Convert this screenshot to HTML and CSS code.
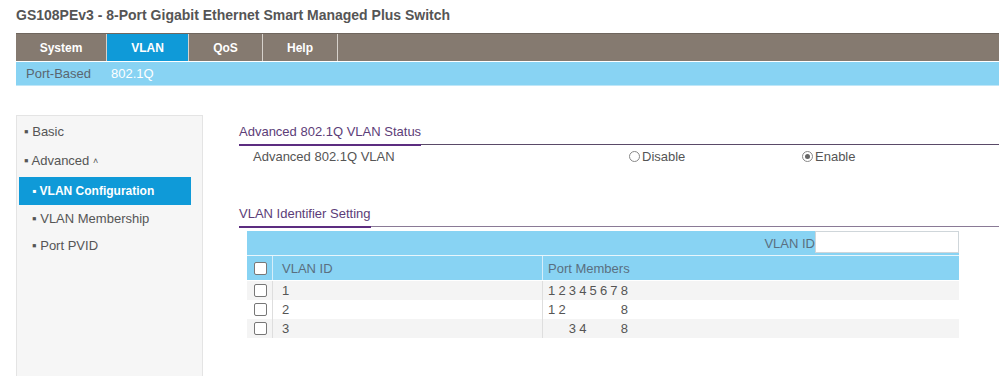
FILE: index.html
```html
<!DOCTYPE html>
<html lang="en">

<head>
    <meta charset="UTF-8">
    <title>GS108PEv3</title>
    <link rel="stylesheet" href="styles.css">
</head>

<body>
    <div class="title">GS108PEv3 - 8-Port Gigabit Ethernet Smart Managed Plus Switch</div>

    <div class="nav">
        <div class="tab tab-system">System</div>
        <div class="tab tab-vlan active">VLAN</div>
        <div class="tab tab-qos">QoS</div>
        <div class="tab tab-help">Help</div>
    </div>
    <div class="subnav">
        <span class="sub">Port-Based</span>
        <span class="sub active">802.1Q</span>
    </div>

    <div class="page">
        <div class="sidebar">
            <div class="side-item">&#9642; Basic</div>
            <div class="side-item open">&#9642; Advanced <span class="caret">&#708;</span></div>
            <div class="side-item sub-item selected">&#9642; VLAN Configuration</div>
            <div class="side-item sub-item">&#9642; VLAN Membership</div>
            <div class="side-item sub-item">&#9642; Port PVID</div>
        </div>

        <div class="main">
            <div class="section-head"><span>Advanced 802.1Q VLAN Status</span></div>
            <div class="status-row">
                <div class="status-label">Advanced 802.1Q VLAN</div>
                <label class="radio radio-disable"><span class="dot"></span>Disable</label>
                <label class="radio radio-enable"><span class="dot on"></span>Enable</label>
            </div>

            <div class="section-head second"><span>VLAN Identifier Setting</span></div>
            <div class="vlan-table">
                <div class="search-row">
                    <span class="search-label">VLAN ID</span>
                    <span class="search-box"></span>
                </div>
                <div class="row head">
                    <div class="c-check"><span class="box"></span></div>
                    <div class="c-id">VLAN ID</div>
                    <div class="c-ports">Port Members</div>
                </div>
                <div class="row odd">
                    <div class="c-check"><span class="box"></span></div>
                    <div class="c-id">1</div>
                    <div class="c-ports ports">
                        <span>1</span><span>2</span><span>3</span><span>4</span><span>5</span><span>6</span><span>7</span><span>8</span>
                    </div>
                </div>
                <div class="row">
                    <div class="c-check"><span class="box"></span></div>
                    <div class="c-id">2</div>
                    <div class="c-ports ports">
                        <span>1</span><span>2</span><span></span><span></span><span></span><span></span><span></span><span>8</span>
                    </div>
                </div>
                <div class="row odd">
                    <div class="c-check"><span class="box"></span></div>
                    <div class="c-id">3</div>
                    <div class="c-ports ports">
                        <span></span><span></span><span>3</span><span>4</span><span></span><span></span><span></span><span>8</span>
                    </div>
                </div>
            </div>
        </div>
    </div>
</body>

</html>
```

FILE: styles.css
```css
body {
    font-family: 'Liberation Sans', Arial, sans-serif;
    margin: 0;
    padding: 0;
    background-color: #fff;
    color: #555;
    font-size: 13px;
    height: 376px;
    overflow: hidden;
}

.title {
    font-size: 14px;
    font-weight: bold;
    color: #555;
    padding: 7px 0 0 16px;
    height: 33px;
    box-sizing: border-box;
}

.nav {
    display: flex;
    margin-left: 16px;
    height: 28px;
    background-color: #857a70;
    border-top: 1px solid #6f665e;
    box-sizing: border-box;
}

.tab {
    color: #fff;
    font-size: 12px;
    font-weight: bold;
    display: flex;
    align-items: center;
    justify-content: center;
    border-right: 1px solid #d7d2cc;
}

.tab-system { width: 90px; }
.tab-vlan { width: 81px; }
.tab-qos { width: 73px; }
.tab-help { width: 74px; }

.tab.active {
    background-color: #0f9ad8;
}

.subnav {
    margin-left: 16px;
    margin-top: 1px;
    height: 24px;
    background-color: #88d3f3;
    border-bottom: 1px solid #bfe6f7;
    display: flex;
    align-items: center;
    padding-left: 10px;
    gap: 20px;
    box-sizing: border-box;
}

.sub {
    color: #5a6670;
    font-size: 13px;
}

.sub.active {
    color: #fff;
}

.page {
    display: flex;
    margin-top: 29px;
    margin-left: 16px;
}

.sidebar {
    width: 187px;
    height: 270px;
    background-color: #f6f6f6;
    border: 1px solid #e4e4e4;
    box-sizing: border-box;
    padding-top: 7px;
}

.side-item {
    height: 29px;
    line-height: 18px;
    padding-left: 7px;
    color: #555;
    font-size: 13px;
}

.side-item.open {
    height: 25px;
}

.side-item .caret {
    font-size: 9px;
    vertical-align: 1px;
}

.sub-item {
    padding-left: 15px;
    height: 27px;
    line-height: 27px;
}

.side-item.selected {
    background-color: #0f9ad8;
    color: #fff;
    font-weight: bold;
    font-size: 12px;
    margin: 0 11px 0 2px;
    padding-left: 13px;
    height: 28px;
    line-height: 28px;
}

.main {
    margin-left: 36px;
    flex: 1;
    padding-top: 9px;
}

.section-head {
    border-bottom: 1px solid #5a4a68;
    height: 21px;
    box-sizing: border-box;
    display: flex;
    align-items: flex-end;
}

.section-head span {
    color: #5c3d78;
    font-size: 13px;
    padding-bottom: 5px;
    border-bottom: 2px solid #5c2d80;
    margin-bottom: -2px;
}

.section-head.second {
    margin-top: 39px;
    border-bottom-color: #8a7a96;
}

.status-row {
    display: flex;
    align-items: center;
    height: 22px;
    padding-left: 14px;
}

.status-label {
    width: 376px;
}

.radio {
    display: flex;
    align-items: center;
}

.radio-disable { width: 173px; }

.dot {
    width: 11px;
    height: 11px;
    border: 1px solid #888;
    border-radius: 50%;
    box-sizing: border-box;
    margin-right: 2px;
    background: #fff;
    position: relative;
}

.dot.on::after {
    content: "";
    position: absolute;
    left: 2px;
    top: 2px;
    width: 5px;
    height: 5px;
    border-radius: 50%;
    background: #666;
}

.vlan-table {
    margin: 4px 0 0 8px;
    width: 712px;
}

.search-row {
    height: 24px;
    background-color: #88d3f3;
    display: flex;
    justify-content: flex-end;
    align-items: center;
    border-bottom: 1px solid #e8f6fc;
}

.search-label {
    color: #5a6f80;
}

.search-box {
    width: 144px;
    height: 22px;
    background: #fff;
    border: 1px solid #cfd6da;
    box-sizing: border-box;
    align-self: flex-start;
}

.row {
    display: flex;
    height: 19px;
    align-items: center;
    color: #555;
}

.row.head {
    height: 24px;
    background-color: #88d3f3;
    color: #5a6f80;
    margin-bottom: 1px;
}

.row.odd {
    background-color: #f4f4f4;
}

.c-check {
    width: 26px;
    height: 100%;
    display: flex;
    align-items: center;
    justify-content: center;
    border-right: 1px solid #dedede;
    box-sizing: border-box;
}

.row.head .c-check,
.row.head .c-id {
    border-right-color: #d6eefa;
}

.box {
    width: 11px;
    height: 11px;
    border: 1px solid #777;
    border-radius: 2px;
    background: #fff;
    margin-left: 2px;
}

.c-id {
    width: 270px;
    height: 100%;
    display: flex;
    align-items: center;
    padding-left: 9px;
    border-right: 1px solid #dedede;
    box-sizing: border-box;
}

.c-ports {
    padding-left: 5px;
}

.ports {
    display: grid;
    grid-template-columns: repeat(8, 10.4px);
}
```
